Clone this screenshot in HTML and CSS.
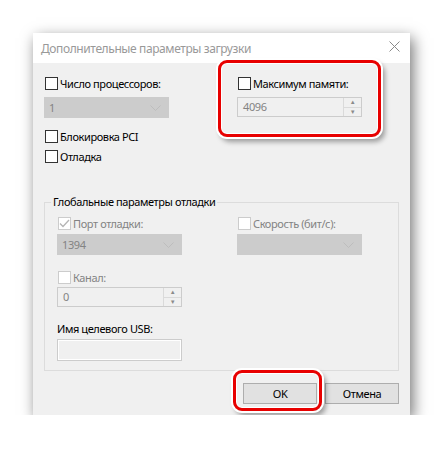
FILE: index.html
```html
<!DOCTYPE html>
<html lang="ru">
  <head>
    <meta charset="UTF-8" />
    <meta name="viewport" content="width=device-width, initial-scale=1.0" />
    <title>Дополнительные параметры загрузки</title>
    <link rel="stylesheet" href="styles.css">
  </head>
  <body>
    <div class="dialog">
      <div class="titlebar">
        <span class="title">Дополнительные параметры загрузки</span>
        <svg class="close" width="11" height="11" viewBox="0 0 11 11">
          <path d="M0.5 0.5 L10.5 10.5 M10.5 0.5 L0.5 10.5" stroke="#8a8a8a" stroke-width="1" fill="none" />
        </svg>
      </div>

      <div class="content">
        <div class="top-grid">
          <div class="col">
            <label class="check"><span class="box"></span>Число процессоров:</label>
            <div class="select disabled">
              <span>1</span>
              <svg class="chevron" width="11" height="6" viewBox="0 0 11 6"><path d="M0.5 0.5 L5.5 5.5 L10.5 0.5" stroke="#bdbdbd" fill="none" /></svg>
            </div>
            <label class="check check-pci"><span class="box"></span>Блокировка PCI</label>
            <label class="check check-debug"><span class="box"></span>Отладка</label>
          </div>
          <div class="col">
            <label class="check"><span class="box"></span>Максимум памяти:</label>
            <div class="spinner">
              <span class="value">4096</span>
              <span class="spin">
                <span class="spin-up">&#9650;</span>
                <span class="spin-down">&#9660;</span>
              </span>
            </div>
          </div>
        </div>

        <fieldset class="group">
          <legend>Глобальные параметры отладки</legend>
          <div class="group-grid">
            <div class="col">
              <label class="check muted"><span class="box">
                <svg width="11" height="9" viewBox="0 0 11 9"><path d="M1 4.5 L4 7.5 L10 1" stroke="#b5b5b5" stroke-width="1.3" fill="none" /></svg>
              </span>Порт отладки:</label>
              <div class="select disabled select-group">
                <span>1394</span>
                <svg class="chevron" width="11" height="6" viewBox="0 0 11 6"><path d="M0.5 0.5 L5.5 5.5 L10.5 0.5" stroke="#bdbdbd" fill="none" /></svg>
              </div>
            </div>
            <div class="col">
              <label class="check muted"><span class="box"></span>Скорость (бит/с):</label>
              <div class="select disabled select-group">
                <span></span>
                <svg class="chevron" width="11" height="6" viewBox="0 0 11 6"><path d="M0.5 0.5 L5.5 5.5 L10.5 0.5" stroke="#bdbdbd" fill="none" /></svg>
              </div>
            </div>
          </div>
          <label class="check muted check-channel"><span class="box"></span>Канал:</label>
          <div class="spinner spinner-small">
            <span class="value">0</span>
            <span class="spin">
              <span class="spin-up">&#9650;</span>
              <span class="spin-down">&#9660;</span>
            </span>
          </div>
          <div class="field-label">Имя целевого USB:</div>
          <div class="textbox"></div>
        </fieldset>

        <div class="buttons">
          <button class="btn">OK</button>
          <button class="btn">Отмена</button>
        </div>
      </div>

      <div class="mark mark-memory"></div>
      <div class="mark mark-ok"></div>
    </div>
  </body>
</html>
```

FILE: styles.css
```css
body {
  margin: 0;
  background: #fff;
  font-family: "Noto Sans", "Open Sans", sans-serif;
  font-size: 12px;
  letter-spacing: -0.4px;
  color: #000;
}
.dialog {
  position: relative;
  margin: 33px 0 0 33px;
  width: 377px;
  height: 382px;
  background: #f0f0f0;
  box-shadow: 3px 5px 14px rgba(0, 0, 0, 0.55);
}
.titlebar {
  height: 30px;
  background: #fff;
  display: flex;
  align-items: center;
  justify-content: space-between;
  padding: 0 10px 0 8px;
}
.title {
  color: #999;
  margin-top: 1px;
}
.close {
  margin-bottom: 3px;
}
.content {
  padding: 14px 11px 0 11px;
  font-size: 11px;
  letter-spacing: -0.4px;
}
.top-grid {
  display: grid;
  grid-template-columns: 126px 126px;
  column-gap: 67px;
}
.col {
  display: flex;
  flex-direction: column;
  align-items: flex-start;
}
.check {
  display: flex;
  align-items: center;
  height: 13px;
  line-height: 13px;
  margin-left: 1px;
  white-space: nowrap;
}
.box {
  box-sizing: border-box;
  width: 13px;
  height: 13px;
  border: 1px solid #333;
  background: #fff;
  margin-right: 2px;
  display: flex;
  align-items: center;
  justify-content: center;
}
.muted {
  color: #838383;
}
.muted .box {
  border-color: #cccccc;
}
.check-pci {
  margin-top: 12px;
}
.check-debug {
  margin-top: 7px;
}
.select {
  box-sizing: border-box;
  width: 125px;
  height: 21px;
  margin-top: 7px;
  display: flex;
  align-items: center;
  justify-content: space-between;
  padding: 0 8px 0 5px;
}
.select.disabled {
  background: #cccccc;
  color: #838383;
}
.select-group {
  margin-top: 4px;
}
.spinner {
  box-sizing: border-box;
  width: 125px;
  height: 20px;
  margin-top: 7px;
  border: 1px solid #cccccc;
  background: #f0f0f0;
  display: flex;
  align-items: stretch;
  justify-content: space-between;
  color: #838383;
}
.spinner .value {
  padding-left: 5px;
  line-height: 18px;
}
.spin {
  width: 17px;
  display: flex;
  flex-direction: column;
  border-left: 1px solid #dadada;
}
.spin-up,
.spin-down {
  flex: 1;
  font-size: 6px;
  line-height: 8px;
  text-align: center;
  color: #8a8a8a;
}
.spin-up {
  border-bottom: 1px solid #dadada;
}
.group {
  margin: 31px 0 0 0;
  padding: 7px 0 0 12px;
  width: 355px;
  height: 177px;
  box-sizing: border-box;
  border: 1px solid #dcdcdc;
}
.group legend {
  padding: 0 2px;
  margin-left: -6px;
  line-height: 16px;
}
.group-grid {
  display: grid;
  grid-template-columns: 125px 125px;
  column-gap: 55px;
}
.check-channel {
  margin-top: 16px;
}
.spinner-small {
  margin-top: 3px;
}
.field-label {
  margin-top: 14px;
  line-height: 16px;
}
.textbox {
  box-sizing: border-box;
  width: 125px;
  height: 22px;
  margin-top: 2px;
  border: 1px solid #cccccc;
  box-shadow: inset 0 0 0 1px #fff;
  background: #f0f0f0;
}
.buttons {
  display: flex;
  justify-content: flex-end;
  gap: 8px;
  margin-top: 12px;
}
.btn {
  box-sizing: border-box;
  width: 74px;
  height: 21px;
  background: #e1e1e1;
  border: 1px solid #adadad;
  font-family: inherit;
  font-size: 11px;
  letter-spacing: inherit;
  color: #000;
  padding: 0;
}
.mark {
  position: absolute;
  box-sizing: border-box;
  border: 3px solid #e80000;
  border-radius: 9px;
  box-shadow: 0 0 0 2px #fff, inset 0 0 0 1px #fff, 3px 4px 5px 1px rgba(0, 0, 0, 0.35);
}
.mark-memory {
  left: 185px;
  top: 27px;
  width: 163px;
  height: 77px;
}
.mark-ok {
  left: 200px;
  top: 337px;
  width: 89px;
  height: 41px;
}
```
